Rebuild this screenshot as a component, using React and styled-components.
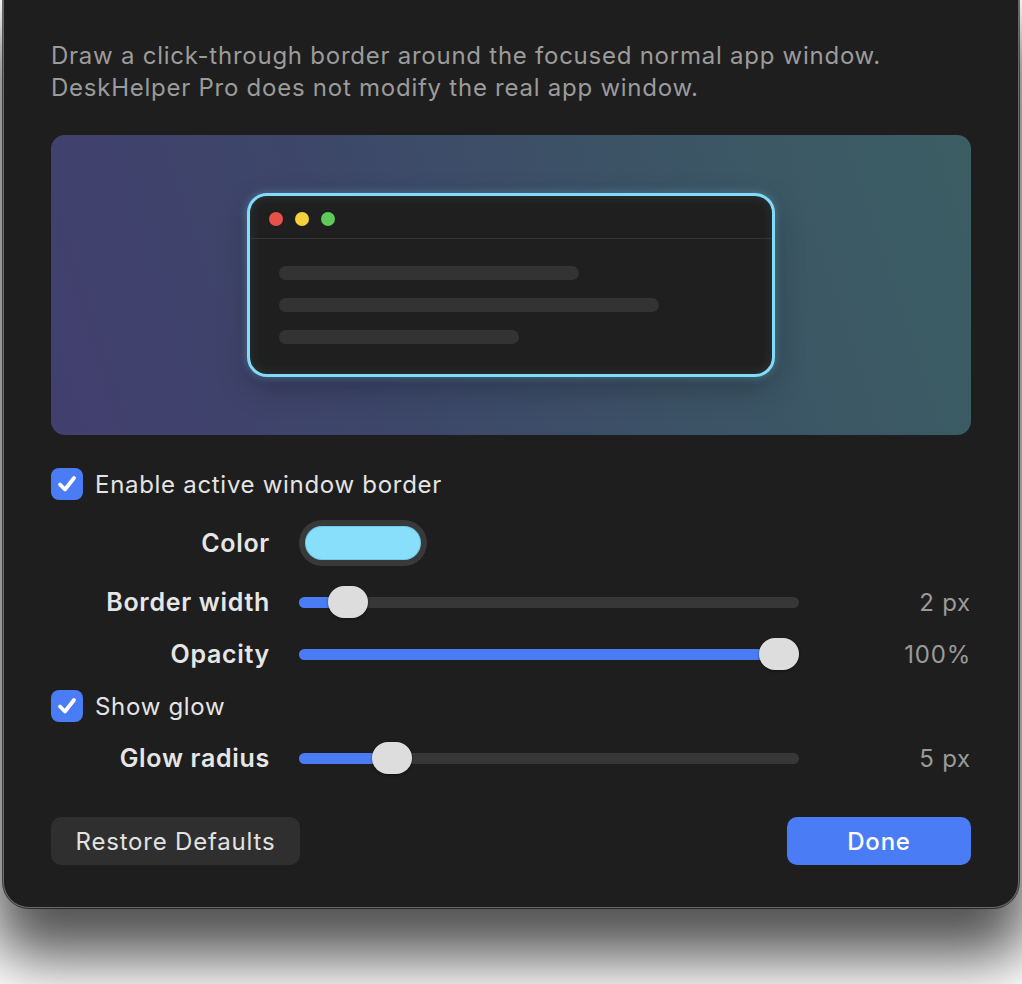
import React from 'react';
import styled, { createGlobalStyle } from 'styled-components';

const GlobalStyle = createGlobalStyle`
  html, body {
    margin: 0;
    padding: 0;
    background: #ffffff;
  }
  body {
    font-family: Inter, 'Noto Sans', 'Liberation Sans', sans-serif;
    -webkit-font-smoothing: antialiased;
  }
`;

const Page = styled.div`
  width: 1022px;
  height: 984px;
  padding: 0 3px;
  box-sizing: border-box;
  overflow: hidden;
`;

const Panel = styled.div`
  box-sizing: border-box;
  width: 1016px;
  height: 908px;
  padding: 40px 47px 0;
  background: #1e1e1e;
  border: 1px solid #6a6a6a;
  border-top: none;
  border-radius: 0 0 26px 26px;
  box-shadow: 0 0 0 1px rgba(0, 0, 0, 0.55), 0 40px 60px 10px rgba(0, 0, 0, 0.68);
  display: flex;
  flex-direction: column;
`;

const Description = styled.p`
  margin: 0;
  font-size: 24px;
  line-height: 32px;
  color: #9b9b9b;
  letter-spacing: 0.75px;
`;

const Preview = styled.div`
  margin-top: 31px;
  height: 300px;
  border-radius: 14px;
  background: linear-gradient(72deg, #423f6f 0%, #3d4769 35%, #3c5266 62%, #3b5e63 100%);
  display: flex;
  align-items: center;
  justify-content: center;
`;

const MockWindow = styled.div`
  width: 528px;
  height: 184px;
  box-sizing: border-box;
  border: 3px solid #82dbf8;
  border-radius: 20px;
  background: #1f1f1f;
  box-shadow: 0 0 8px rgba(130, 219, 248, 0.35), inset 0 0 12px rgba(130, 219, 248, 0.12),
    0 12px 30px rgba(0, 0, 0, 0.25);
  overflow: hidden;
`;

const TitleBar = styled.div`
  height: 43px;
  box-sizing: border-box;
  padding: 16px 0 0 19px;
  display: flex;
  gap: 12px;
  border-bottom: 1px solid #343434;
`;

const Dot = styled.span`
  width: 14px;
  height: 14px;
  border-radius: 50%;
  background: ${p => p.color};
`;

const MockBody = styled.div`
  padding: 27px 0 0 29px;
  display: flex;
  flex-direction: column;
  gap: 18px;
`;

const MockLine = styled.div`
  width: ${p => p.w}px;
  height: 14px;
  border-radius: 7px;
  background: #333333;
`;

const Controls = styled.div`
  margin-top: 33px;
  display: flex;
  flex-direction: column;
  gap: 20px;
`;

const CheckRow = styled.label`
  display: flex;
  align-items: center;
  gap: 12px;
  height: 32px;
  font-size: 24px;
  letter-spacing: 0.7px;
  color: #e4e4e4;
`;

const CheckBox = styled.span`
  width: 32px;
  height: 32px;
  border-radius: 8px;
  background: #4a7cf6;
  display: flex;
  align-items: center;
  justify-content: center;
`;

const FieldRow = styled.div`
  display: grid;
  grid-template-columns: 219px 500px 1fr;
  column-gap: 29px;
  align-items: center;
  height: ${p => p.h || 32}px;
`;

const FieldLabel = styled.span`
  text-align: right;
  font-size: 25px;
  font-weight: 600;
  letter-spacing: 0.7px;
  color: #e6e6e6;
`;

const FieldValue = styled.span`
  text-align: right;
  font-size: 24px;
  letter-spacing: 0.8px;
  color: #9a9a9a;
`;

const SwatchWell = styled.div`
  width: 128px;
  height: 46px;
  box-sizing: border-box;
  padding: 6px;
  border-radius: 23px;
  background: #393939;
`;

const Swatch = styled.div`
  height: 100%;
  border-radius: 17px;
  background: #87dffb;
  box-shadow: inset 0 0 0 1px rgba(60, 160, 200, 0.35);
`;

const Track = styled.div`
  position: relative;
  height: 11px;
  border-radius: 6px;
  background: #373737;
`;

const Fill = styled.div`
  height: 100%;
  border-radius: 6px;
  background: #4a7cf6;
`;

const Thumb = styled.div`
  position: absolute;
  top: 50%;
  width: 40px;
  height: 32px;
  margin-top: -16px;
  border-radius: 16px;
  background: #dddddd;
  box-shadow: 0 1px 3px rgba(0, 0, 0, 0.4);
`;

const Footer = styled.div`
  margin-top: 43px;
  display: flex;
  justify-content: space-between;
`;

const Button = styled.button`
  height: 48px;
  width: ${p => p.w}px;
  border: none;
  border-radius: 10px;
  font-family: inherit;
  font-size: 24px;
  letter-spacing: 0.8px;
  font-weight: ${p => (p.primary ? 500 : 400)};
  color: ${p => (p.primary ? '#ffffff' : '#e2e2e2')};
  background: ${p => (p.primary ? '#4a7cf6' : '#2f2f2f')};
`;

const Check = () => (
  <CheckBox>
    <svg width="24" height="24" viewBox="0 0 24 24">
      <path d="M5 12.5 L10 17.5 L19 6" fill="none" stroke="#fff" strokeWidth="3.8"
        strokeLinecap="round" strokeLinejoin="round" />
    </svg>
  </CheckBox>
);

const Slider = ({ value }) => {
  // thumb travels 460px inside the 500px track
  const left = value * 460;
  return (
    <Track>
      <Fill style={{ width: left + 20 }} />
      <Thumb style={{ left }} />
    </Track>
  );
};

const App = () => (
  <Page>
    <GlobalStyle />
    <Panel>
      <Description>
        Draw a click-through border around the focused normal app window.
        <br />
        DeskHelper Pro does not modify the real app window.
      </Description>

      <Preview>
        <MockWindow>
          <TitleBar>
            <Dot color="#e8504a" />
            <Dot color="#f5d13c" />
            <Dot color="#5fc95a" />
          </TitleBar>
          <MockBody>
            <MockLine w={300} />
            <MockLine w={380} />
            <MockLine w={240} />
          </MockBody>
        </MockWindow>
      </Preview>

      <Controls>
        <CheckRow>
          <Check />
          Enable active window border
        </CheckRow>
        <FieldRow h={46}>
          <FieldLabel>Color</FieldLabel>
          <SwatchWell>
            <Swatch />
          </SwatchWell>
        </FieldRow>
        <FieldRow>
          <FieldLabel>Border width</FieldLabel>
          <Slider value={0.063} />
          <FieldValue>2 px</FieldValue>
        </FieldRow>
        <FieldRow>
          <FieldLabel>Opacity</FieldLabel>
          <Slider value={1} />
          <FieldValue>100%</FieldValue>
        </FieldRow>
        <CheckRow>
          <Check />
          Show glow
        </CheckRow>
        <FieldRow>
          <FieldLabel>Glow radius</FieldLabel>
          <Slider value={0.158} />
          <FieldValue>5 px</FieldValue>
        </FieldRow>
      </Controls>

      <Footer>
        <Button w={249}>Restore Defaults</Button>
        <Button w={184} primary>Done</Button>
      </Footer>
    </Panel>
  </Page>
);

export default App;
